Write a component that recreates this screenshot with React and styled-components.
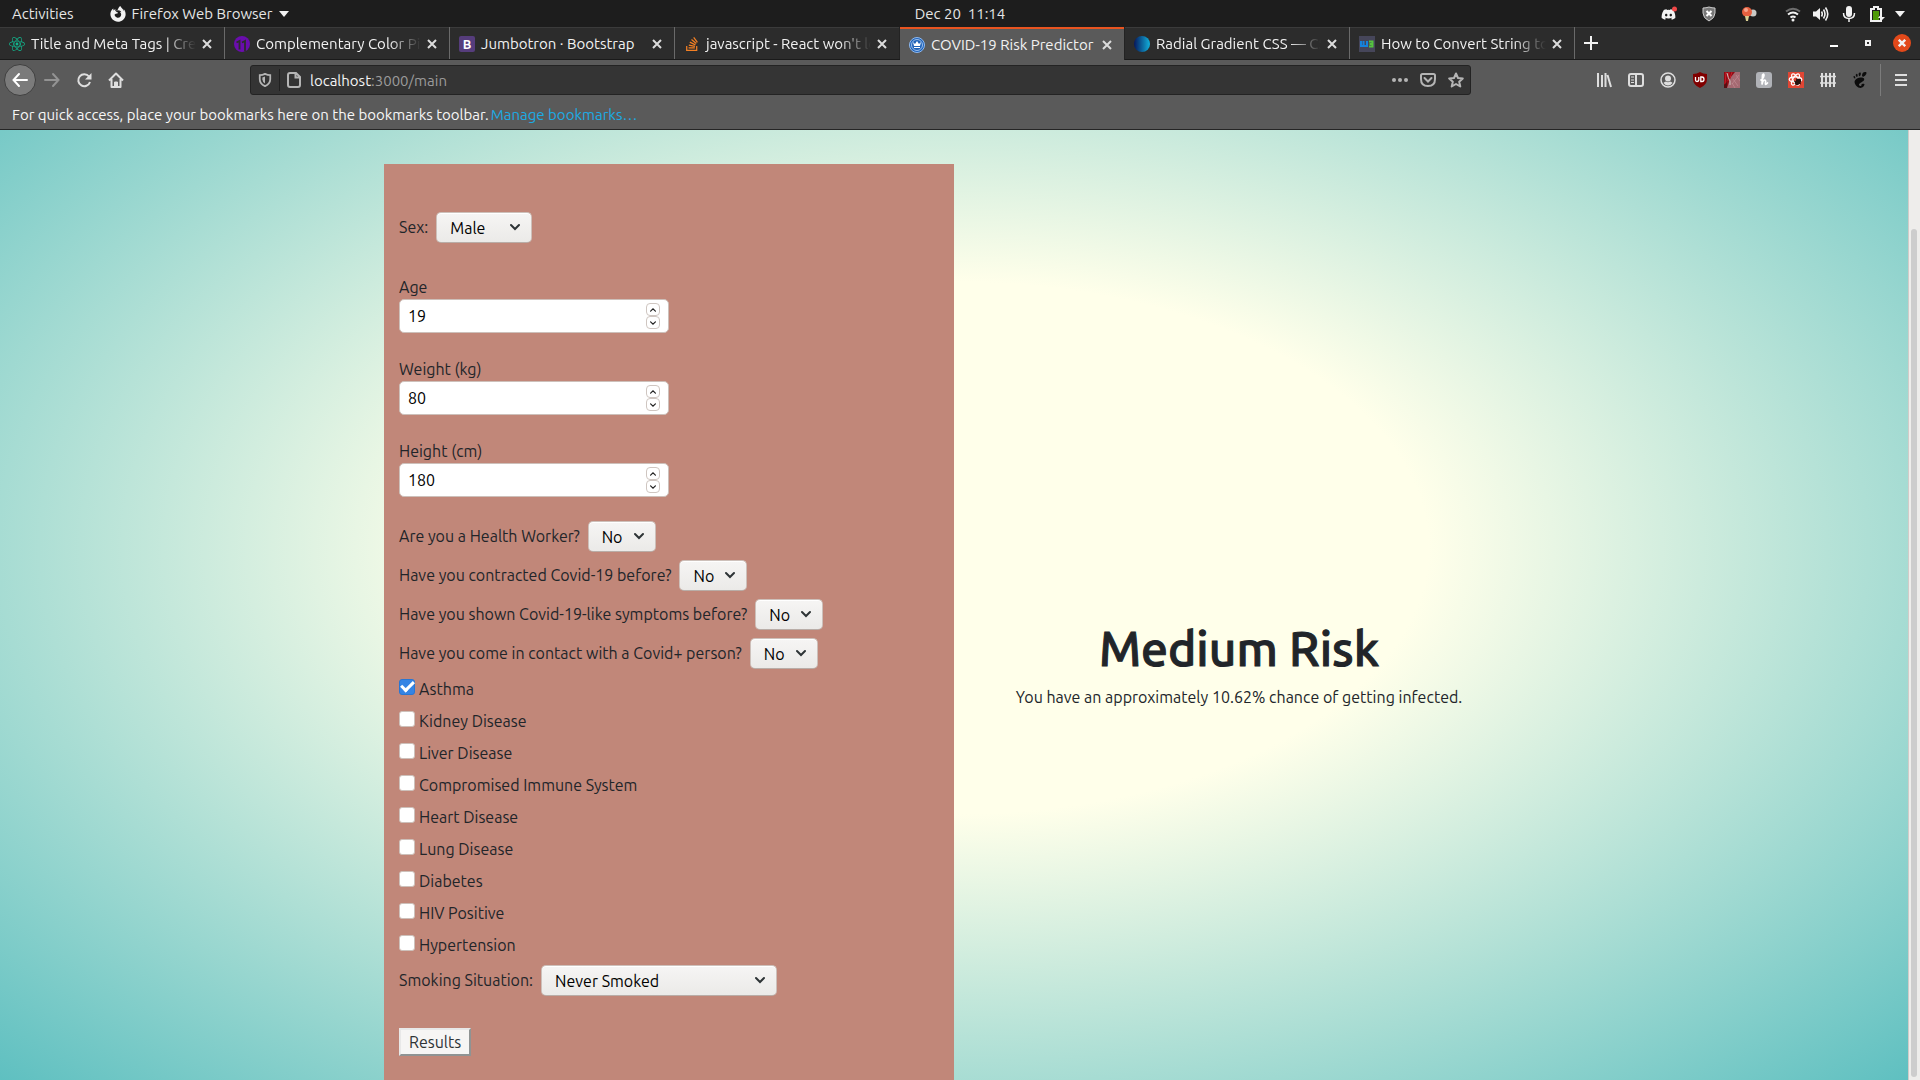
import React, { useState } from "react";
import styled, { createGlobalStyle, css } from "styled-components";
import { FaReact, FaDiscord, FaStackOverflow, FaFirefoxBrowser } from "react-icons/fa";
import { SiGnome } from "react-icons/si";

const GlobalStyle = createGlobalStyle`
  * { box-sizing: border-box; }
  html, body, #root { height: 100%; }
  body {
    margin: 0;
    overflow: hidden;
    font-family: Ubuntu, "Noto Sans", "Open Sans", sans-serif;
    font-size: 16px;
    line-height: 24px;
    color: #212529;
  }
  button, input, select { font: inherit; margin: 0; }
  svg { display: block; flex: none; }
`;

const Screen = styled.div`
  display: flex;
  flex-direction: column;
  height: 100vh;
`;

const plainButton = css`
  display: flex;
  align-items: center;
  justify-content: center;
  padding: 0;
  border: 0;
  background: none;
  color: inherit;
`;

/* Desktop bar */

const TopBar = styled.header`
  display: grid;
  grid-template-columns: 1fr auto 1fr;
  align-items: center;
  height: 27px;
  padding: 0 12px;
  background: #1d1d1d;
  color: #e6e6e6;
  font-size: 15px;
`;

const TopGroup = styled.div`
  display: flex;
  align-items: center;
  padding-right: ${(p) => (p.$end ? 3 : 0)}px;
  justify-content: ${(p) => (p.$end ? "flex-end" : "flex-start")};
`;

const AppMenu = styled.button`
  ${plainButton}
  gap: 6px;
`;

const Activities = styled.button`
  ${plainButton}
  margin-right: 36px;
`;

const TrayGroup = styled.div`
  display: flex;
  align-items: center;
  gap: ${(p) => p.$gap}px;
  margin-right: ${(p) => p.$after || 0}px;
`;

/* Tabs */

const TabStrip = styled.nav`
  display: flex;
  height: 33px;
  background: #2c2c2c;
  border-bottom: 1px solid #1a1a1a;
  box-shadow: inset 0 1px #3b3b3b;
  color: #f2f2f2;
  font-size: 15px;
`;

const TabItem = styled.div`
  display: flex;
  align-items: center;
  flex: 0 1 225px;
  min-width: 0;
  height: ${(p) => (p.$active ? 33 : 32)}px;
  padding: 2px 10px 0 9px;
  gap: 4px;
  border-right: 1px solid ${(p) => (p.$active || p.$beforeActive ? "#232323" : "#6a6a6a")};
  background: ${(p) => (p.$active ? "#5a5a5a" : "transparent")};
  box-shadow: ${(p) => (p.$active ? "inset 0 2px #e95420" : "none")};
`;

const TabTitle = styled.a`
  flex: 1;
  min-width: 0;
  padding-left: 2px;
  overflow: hidden;
  white-space: nowrap;
  color: inherit;
  text-decoration: none;
  mask-image: ${(p) => (p.$fade ? "linear-gradient(90deg, #000 calc(100% - 32px), transparent)" : "none")};
`;

const TabClose = styled.button`
  ${plainButton}
  width: 14px;
  height: 16px;
  color: #dcdcdc;
`;

const NewTab = styled.button`
  ${plainButton}
  width: 32px;
  height: 32px;
`;

const WindowControls = styled.div`
  display: flex;
  align-items: center;
  gap: 16px;
  margin-left: auto;
  padding-right: 9px;
`;

const WindowButton = styled.button`
  ${plainButton}
  width: 18px;
  height: 18px;
  border-radius: 50%;
  background: ${(p) => (p.$close ? "#e2491a" : "none")};
`;

/* Navigation */

const NavBar = styled.div`
  display: grid;
  grid-template-columns: 246px minmax(0, 1fr) 443px;
  align-items: center;
  height: 40px;
  padding-left: 4px;
  background: #5a5a5a;
  color: #dedede;
`;

const NavGroup = styled.div`
  display: flex;
  align-items: center;
`;

const NavButton = styled.button`
  ${plainButton}
  width: 32px;
  height: 32px;
  color: ${(p) => (p.$dim ? "#939393" : "inherit")};
`;

const BackButton = styled(NavButton)`
  border: 1px solid #404040;
  border-radius: 50%;
  background: #7b7b7b;
`;

const AddressBar = styled.div`
  display: flex;
  align-items: center;
  height: 30px;
  margin-right: 6px;
  border: 1px solid #232323;
  border-radius: 3px;
  background: #343434;
  color: #b5b5b5;
`;

const AddressButton = styled.button`
  ${plainButton}
  width: 28px;
  height: 28px;
`;

const AddressDivider = styled.span`
  width: 1px;
  height: 22px;
  background: #202020;
`;

const Address = styled.div`
  flex: 1;
  min-width: 0;
  padding: 1px 0 0 2px;
  font-size: 15px;
  color: #9b9b9b;
  b { font-weight: 400; color: #f5f5f5; }
`;

const Extensions = styled.div`
  display: flex;
  align-items: center;
  justify-content: flex-end;
`;

const MenuButton = styled(NavButton)`
  width: 40px;
  margin-left: 4px;
  border-left: 1px solid #7c7c7c;
`;

const BookmarksBar = styled.div`
  display: flex;
  align-items: center;
  gap: 2px;
  height: 30px;
  padding: 0 12px;
  border-bottom: 1px solid #252525;
  background: #5a5a5a;
  color: #f7f7f7;
  font-size: 15px;
  a { color: #1cabe4; text-decoration: none; }
`;

/* Web page */

const Viewport = styled.div`
  display: flex;
  flex: 1;
  min-height: 0;
`;

const Page = styled.main`
  flex: 1;
  min-width: 0;
  overflow: hidden;
  padding-top: 34px;
  background: radial-gradient(ellipse 71% 80% at 50% 44%, #ffffea 35%, #5dbfc0 100%);
`;

const Columns = styled.div`
  display: grid;
  grid-template-columns: 1fr 1fr;
  width: 100%;
  max-width: 1140px;
  margin: 0 auto;
`;

const Panel = styled.form`
  display: flex;
  flex-direction: column;
  align-items: flex-start;
  gap: 8px;
  padding: 48px 15px 124px;
  background: #c18779;
`;

const SelectRow = styled.div`
  display: flex;
  align-items: flex-start;
  gap: 8px;
  margin-bottom: ${(p) => p.$after || 0}px;
  line-height: 30px;
`;

const SelectBox = styled.div`
  position: relative;
  width: ${(p) => p.$width}px;
  color: #2e3436;
  svg {
    position: absolute;
    right: 12px;
    top: 10px;
    pointer-events: none;
  }
`;

const Select = styled.select`
  display: block;
  width: 100%;
  height: 31px;
  padding: 0 13px 2px;
  appearance: none;
  border: 1px solid #cdc0ba;
  border-bottom-color: #b9ada7;
  border-radius: 5px;
  background: linear-gradient(#f6f5f4, #ebeae8);
  box-shadow: inset 0 1px #fff;
  color: #000;
`;

const Field = styled.div`
  display: flex;
  flex-direction: column;
  width: 270px;
  margin-bottom: 16px;
`;

const NumberBox = styled.div`
  position: relative;
`;

const NumberInput = styled.input`
  display: block;
  width: 100%;
  height: 34px;
  padding: 0 30px 0 8px;
  appearance: textfield;
  border: 1px solid #cdc0ba;
  border-radius: 5px;
  background: #fff;
  color: #000;
  &::-webkit-inner-spin-button { appearance: none; }
`;

const Stepper = styled.div`
  position: absolute;
  right: 9px;
  top: 4px;
  display: flex;
  flex-direction: column;
`;

const StepButton = styled.button`
  ${plainButton}
  width: 14px;
  height: 13px;
  border: 1px solid #cfc6c1;
  border-radius: 4px;
  background: #fff;
  color: #222;
`;

const CheckRow = styled.label`
  display: flex;
  align-items: flex-start;
  gap: 4px;
`;

const Checkbox = styled.input`
  display: grid;
  place-items: center;
  width: 16px;
  height: 16px;
  margin-top: 2px;
  appearance: none;
  border: 1px solid #cdc0ba;
  border-radius: 3px;
  background: #fff;
  &:checked { border-color: #2a76d2; background: #3584e4; }
  &:checked::after {
    content: "";
    width: 10px;
    height: 5px;
    margin-bottom: 4px;
    border: solid #fff;
    border-width: 0 0 3px 3px;
    transform: rotate(-45deg);
  }
`;

const ResultsButton = styled.button`
  height: 28px;
  margin-top: 24px;
  padding: 0 8px;
  border: 2px solid;
  border-color: #e8e8e8 #8f9393 #8f9393 #e8e8e8;
  background: #f6f5f4;
  color: #2e3436;
  line-height: 24px;
`;

const Outcome = styled.section`
  display: flex;
  flex-direction: column;
  align-items: center;
  justify-content: center;
  padding: 0 15px;
  text-align: center;
`;

const OutcomeTitle = styled.h1`
  margin: 0 0 8px;
  font-size: 48px;
  font-weight: 500;
  line-height: 57px;
  -webkit-text-stroke: 1px currentColor;
`;

const OutcomeText = styled.p`
  margin: 0 0 16px;
`;

const ScrollTrack = styled.div`
  display: flex;
  width: 12px;
  padding: 99px 2px 3px;
  border-left: 1px solid #d2cbc8;
  background: #eeedeb;
`;

const ScrollThumb = styled.div`
  flex: 1;
  margin-right: 1px;
  border-radius: 3px;
  background: #cdcdcd;
`;

const Cross = ({ size = 10, width = 2 }) => (
  <svg width={size} height={size} viewBox="0 0 10 10" stroke="currentColor" strokeWidth={width} fill="none">
    <path d="M1 1l8 8M9 1l-8 8" />
  </svg>
);

const Chevron = ({ size = 10, up }) => (
  <svg width={size} height={size} viewBox="0 0 10 10" fill="none" stroke="currentColor" strokeWidth="2" strokeLinecap="round">
    <path d={up ? "M1 7l4-4 4 4" : "M1 3l4 4 4-4"} />
  </svg>
);

const Caret = () => (
  <svg width="10" height="6" viewBox="0 0 10 6" fill="#f2f2f2"><path d="M0 0h10L5 6z" /></svg>
);

const favicons = {
  react: <FaReact size={16} color="#12b48c" />,
  eleven: (
    <svg width="16" height="16" viewBox="0 0 16 16">
      <circle cx="8" cy="8" r="8" fill="#6a0dad" />
      <path d="M2.500 6.500L5.500 5v8.500M8 6.500L11 5v10.500" stroke="#2c2c2c" strokeWidth="1.800" fill="none" />
    </svg>
  ),
  bootstrap: (
    <svg width="16" height="16" viewBox="0 0 16 16">
      <rect width="16" height="16" rx="2" fill="#563d7c" />
      <text x="8" y="12.500" textAnchor="middle" fontSize="13" fontWeight="700" fill="#fff">B</text>
    </svg>
  ),
  stack: <FaStackOverflow size={16} color="#f48024" />,
  covid: (
    <svg width="16" height="16" viewBox="0 0 16 16" fill="none">
      <circle cx="8" cy="8" r="7.500" fill="#1f62b8" stroke="#8fbaf0" />
      <circle cx="8" cy="8" r="5.500" stroke="#bcd6f6" strokeWidth=".8" />
      <path d="M4 5l2 2 2-3 2 3 2-2-1 4H5z" fill="#fff" />
      <path d="M5 10.500h6" stroke="#fff" strokeWidth="1" />
    </svg>
  ),
  radial: (
    <svg width="16" height="16" viewBox="0 0 16 16">
      <defs>
        <linearGradient id="orb"><stop stopColor="#06175c" /><stop offset="1" stopColor="#12b1dc" /></linearGradient>
      </defs>
      <circle cx="8" cy="8" r="8" fill="url(#orb)" />
    </svg>
  ),
  w3: (
    <svg width="16" height="16" viewBox="0 0 16 16" fill="none" strokeWidth="2">
      <rect width="16" height="16" fill="#46465a" />
      <path d="M2 5v5h2.500V5M4.500 10H8V5" stroke="#1583dd" />
      <path d="M10 5.500h3.500v5H10M10.500 8h3" stroke="#55c23f" />
    </svg>
  ),
};

const tabs = [
  { icon: "react", title: "Title and Meta Tags | Crea", fade: true },
  { icon: "eleven", title: "Complementary Color Pic", fade: true },
  { icon: "bootstrap", title: "Jumbotron · Bootstrap" },
  { icon: "stack", title: "javascript - React won't lo", fade: true },
  { icon: "covid", title: "COVID-19 Risk Predictor", active: true },
  { icon: "radial", title: "Radial Gradient CSS — CSS", fade: true },
  { icon: "w3", title: "How to Convert String to", fade: true },
];

const line = { fill: "none", stroke: "currentColor", strokeWidth: 2 };

const toolbar = [
  ["Library", <svg width="16" height="16" viewBox="0 0 16 16" {...line}><path d="M2 1v14M6 3v12M9.500 1v14M11.500 3l3.500 12" /></svg>],
  ["Sidebars", <svg width="16" height="16" viewBox="0 0 16 16" {...line}><rect x="1" y="2" width="14" height="12" rx="2" /><path d="M8 2v12" /><path d="M3 5h3M3 8h3M3 10.500h3" strokeWidth="1" /></svg>],
  ["Account", <svg width="16" height="16" viewBox="0 0 16 16"><circle cx="8" cy="8" r="7" fill="none" stroke="currentColor" strokeWidth="1.500" /><circle cx="8" cy="6.500" r="3" fill="currentColor" /><path d="M3.500 11q1-1.500 2.500-1.500 2 1.500 4 0 1.500 0 2.500 1.500Q10.500 13.500 8 13.500T3.500 11z" fill="currentColor" /></svg>],
  ["uBlock", <svg width="16" height="16" viewBox="0 0 16 16"><path d="M8 0q3 2 7 2v5q0 6-7 9-7-3-7-9V2q4 0 7-2z" fill="#800000" /><path d="M3.500 5v3q0 1.500 1.500 1.500T6.800 8V5M8.800 5v4.500H10Q12 9.500 12 7.300T10 5z" fill="none" stroke="#fff" strokeWidth="1.300" /></svg>],
  ["Curtain", <svg width="16" height="16" viewBox="0 0 16 16"><rect width="16" height="16" fill="#a56a72" /><path d="M0 0h11L7 5l-2 5-2 6H0z" fill="#8f0b14" /><path d="M2 0L1 12M5 0L4 9M8 0L6 6" stroke="#c91e29" /><path d="M0 13l3-3v6H0z" fill="#571013" /><path d="M3 1q1 5 3 8v4" fill="none" stroke="#c9c4bd" strokeWidth="1" /><path d="M9 7l5 7M12 3l4 6M8 11l3 5M15 3l-7 9" stroke="#c59198" strokeWidth=".6" /></svg>],
  ["Honey", <svg width="16" height="16" viewBox="0 0 16 16"><rect width="16" height="16" rx="3" fill="#b0b2b7" /><path d="M5 8q3-2 3-4.500T6.500 3L6 12.500Q7 8 8.500 8t1 3 2 0" fill="none" stroke="#fff" strokeWidth="1.700" strokeLinecap="round" /></svg>],
  ["React Tools", <svg width="16" height="16" viewBox="0 0 16 16"><rect width="16" height="16" fill="#e04634" /><g fill="none" stroke="#fff" strokeWidth="1.200"><ellipse cx="7.500" cy="7.500" rx="6.300" ry="2.600" /><ellipse cx="7.500" cy="7.500" rx="6.300" ry="2.600" transform="rotate(60 7.500 7.500)" /><ellipse cx="7.500" cy="7.500" rx="6.300" ry="2.600" transform="rotate(120 7.500 7.500)" /></g><ellipse cx="10" cy="10" rx="2.500" ry="3.500" transform="rotate(45 10 10)" fill="#25130f" /><path d="M6 9l7 3M8 7l5 1M8 13l1-6" stroke="#25130f" /></svg>],
  ["Fence", <svg width="16" height="16" viewBox="0 0 16 16" {...line}><path d="M2 1v14M6 1v14M10 1v14M14 1v14" /><path d="M0 4.500h16M0 11h16" strokeWidth="1.500" /></svg>],
  ["GNOME", <SiGnome size={16} color="#0c0c0c" />],
];

const yesNo = [
  ["worker", "Are you a Health Worker?"],
  ["contracted", "Have you contracted Covid-19 before?"],
  ["symptoms", "Have you shown Covid-19-like symptoms before?"],
  ["contact", "Have you come in contact with a Covid+ person?"],
];

const conditions = [
  "Asthma", "Kidney Disease", "Liver Disease", "Compromised Immune System", "Heart Disease",
  "Lung Disease", "Diabetes", "HIV Positive", "Hypertension",
];

function LabeledSelect({ id, label, options, width = 68, after }) {
  return (
    <SelectRow $after={after}>
      <label htmlFor={id}>{label}</label>
      <SelectBox $width={width}>
        <Select id={id}>{options.map((o) => <option key={o}>{o}</option>)}</Select>
        <Chevron />
      </SelectBox>
    </SelectRow>
  );
}

function NumberField({ id, label, initial }) {
  const [value, setValue] = useState(initial);
  return (
    <Field>
      <label htmlFor={id}>{label}</label>
      <NumberBox>
        <NumberInput id={id} type="number" value={value} onChange={(e) => setValue(Number(e.target.value))} />
        <Stepper>
          <StepButton type="button" aria-label={`Increase ${label}`} onClick={() => setValue(value + 1)}><Chevron size={6} up /></StepButton>
          <StepButton type="button" aria-label={`Decrease ${label}`} onClick={() => setValue(value - 1)}><Chevron size={6} /></StepButton>
        </Stepper>
      </NumberBox>
    </Field>
  );
}

function DesktopBar() {
  return (
    <TopBar>
      <TopGroup>
        <Activities>Activities</Activities>
        <AppMenu><FaFirefoxBrowser size={16} color="#f2f2f2" />Firefox Web Browser<Caret /></AppMenu>
      </TopGroup>
      <span>Dec 20&nbsp; 11:14</span>
      <TopGroup $end>
        <TrayGroup $gap={24} $after={28}>
          <svg width="16" height="16" viewBox="0 0 16 16"><g transform="translate(0 1)"><FaDiscord size={15} color="#f4f4f4" /></g><circle cx="13.500" cy="3" r="2.500" fill="#f04747" /></svg>
          <svg width="16" height="16" viewBox="0 0 16 16"><path d="M2 2q3 0 6-1 3 1 6 1v5q0 5-6 8-6-3-6-8z" fill="#777" stroke="#ccc" /><path d="M5.500 5l5 5M10.500 5l-5 5" stroke="#fff" strokeWidth="2" /></svg>
          <svg width="16" height="16" viewBox="0 0 16 16"><circle cx="12" cy="7" r="3.500" fill="#c9c9c5" /><circle cx="6" cy="6" r="5" fill="#e5603f" /><circle cx="5" cy="4" r="2" fill="#f6a38c" /><path d="M4 10h4l-1 5H5z" fill="#d9cf91" /></svg>
        </TrayGroup>
        <TrayGroup $gap={12} $after={10}>
          <svg width="16" height="16" viewBox="0 0 16 16" {...line}><path d="M1 5.500q7-5.500 14 0" stroke="#6d6d6d" /><path d="M3 8.500q5-4 10 0M5.500 11.500q2.500-2 5 0" stroke="#f2f2f2" /><circle cx="8" cy="14" r="1.500" fill="#f2f2f2" stroke="none" /></svg>
          <svg width="16" height="16" viewBox="0 0 16 16" fill="none" stroke="#f2f2f2" strokeWidth="1.600"><path d="M0 5.500h3L7 2v12L3 10.500H0z" fill="#f2f2f2" stroke="none" /><path d="M8.500 5.500q1.500 2.500 0 5M10.500 3.500q3 4.500 0 9M12.500 1.500q4.500 6.500 0 13" /></svg>
          <svg width="16" height="16" viewBox="0 0 16 16"><rect x="5" y="0" width="6" height="11" rx="3" fill="#f2f2f2" /><path d="M2.500 7q0 5.500 5.500 5.500T13.500 7M8 12v4" fill="none" stroke="#f2f2f2" strokeWidth="1.500" /></svg>
          <svg width="16" height="16" viewBox="0 0 16 16"><path d="M5 1h4v2h3v12H2V3h3z" fill="#1d1d1d" stroke="#f2f2f2" strokeWidth="2" /><path d="M4 5h6v9H4z" fill="#4e9a06" /><path d="M13 7l-4 5h3l-1 4 5-5h-3z" fill="#f2f2f2" /></svg>
        </TrayGroup>
        <Caret />
      </TopGroup>
    </TopBar>
  );
}

function BrowserChrome() {
  return (
    <>
      <TabStrip>
        {tabs.map((t, i) => (
          <TabItem key={t.icon} $active={t.active} $beforeActive={tabs[i + 1]?.active}>
            {favicons[t.icon]}
            <TabTitle href="#" $fade={t.fade}>{t.title}</TabTitle>
            <TabClose aria-label="Close tab"><Cross /></TabClose>
          </TabItem>
        ))}
        <NewTab aria-label="New tab"><svg width="14" height="14" viewBox="0 0 14 14" {...line}><path d="M7 0v14M0 7h14" /></svg></NewTab>
        <WindowControls>
          <WindowButton aria-label="Minimize"><svg width="8" height="8" viewBox="0 0 8 8" fill="#fff"><path d="M0 6h8v2H0z" /></svg></WindowButton>
          <WindowButton aria-label="Restore"><svg width="6" height="6" viewBox="0 0 6 6" {...line}><path d="M1 1h4v4H1z" /></svg></WindowButton>
          <WindowButton $close aria-label="Close window"><Cross size={8} width={3} /></WindowButton>
        </WindowControls>
      </TabStrip>
      <NavBar>
        <NavGroup>
          <BackButton aria-label="Back"><svg width="16" height="16" viewBox="0 0 16 16" {...line} stroke="#fff" strokeLinecap="round"><path d="M15 8H1.500M7 2L1.500 8 7 14" /></svg></BackButton>
          <NavButton $dim aria-label="Forward"><svg width="16" height="16" viewBox="0 0 16 16" {...line} strokeLinecap="round"><path d="M1 8h13.500M9 2l5.500 6L9 14" /></svg></NavButton>
          <NavButton aria-label="Reload"><svg width="16" height="16" viewBox="0 0 16 16" {...line}><path d="M13 4.500A6 6 0 1 0 14 10" /><path d="M15.500 1v6.500H9z" fill="currentColor" stroke="none" /></svg></NavButton>
          <NavButton aria-label="Home"><svg width="16" height="16" viewBox="0 0 16 16" {...line}><path d="M1 8.500L8 1.500l7 7M3.500 7v8h9V7" strokeLinejoin="round" /><path d="M6.500 15v-5h3v5" fill="currentColor" strokeWidth="1" /></svg></NavButton>
        </NavGroup>
        <AddressBar>
          <AddressButton aria-label="Site protections"><svg width="14" height="14" viewBox="0 0 16 16" {...line}><path d="M2 2.500Q5 2.500 8 1q3 1.500 6 1.500V7q0 5-6 8-6-3-6-8z" /><path d="M8 4v8q-3-2-3-5V5z" fill="currentColor" stroke="none" /></svg></AddressButton>
          <AddressDivider />
          <AddressButton aria-label="Site information"><svg width="14" height="16" viewBox="0 0 14 16" {...line}><path d="M3 1h6l4 4v8q0 2-2 2H3q-2 0-2-2V3q0-2 2-2zM8.500 1v4.500H13" /></svg></AddressButton>
          <Address><b>localhost</b>:3000/main</Address>
          <AddressButton aria-label="Page actions"><svg width="16" height="16" viewBox="0 0 16 16" fill="currentColor"><circle cx="2" cy="8" r="2" /><circle cx="8" cy="8" r="2" /><circle cx="14" cy="8" r="2" /></svg></AddressButton>
          <AddressButton aria-label="Save to Pocket"><svg width="16" height="16" viewBox="0 0 16 16" {...line}><path d="M2.500 2h11Q15 2 15 3.500V7q0 7-7 7T1 7V3.500Q1 2 2.500 2z" /><path d="M4.500 6L8 9.500 11.500 6" strokeLinecap="round" /></svg></AddressButton>
          <AddressButton aria-label="Bookmark this page"><svg width="16" height="16" viewBox="0 0 16 16" {...line} strokeLinejoin="round"><path d="M8 1.500l2 4.500 4.800.5-3.600 3.200 1.100 4.800L8 12l-4.300 2.500 1.100-4.800L1.200 6.500 6 6z" /></svg></AddressButton>
        </AddressBar>
        <Extensions>
          {toolbar.map(([name, icon]) => <NavButton key={name} aria-label={name}>{icon}</NavButton>)}
          <MenuButton aria-label="Open menu"><svg width="12" height="12" viewBox="0 0 12 12" {...line}><path d="M0 1h12M0 6h12M0 11h12" /></svg></MenuButton>
        </Extensions>
      </NavBar>
      <BookmarksBar>
        <span>For quick access, place your bookmarks here on the bookmarks toolbar.</span>
        <a href="#">Manage bookmarks…</a>
      </BookmarksBar>
    </>
  );
}

export default function App() {
  return (
    <Screen>
      <GlobalStyle />
      <DesktopBar />
      <BrowserChrome />
      <Viewport>
        <Page>
          <Columns>
            <Panel onSubmit={(e) => e.preventDefault()}>
              <LabeledSelect id="sex" label="Sex:" options={["Male", "Female"]} width={96} after={24} />
              <NumberField id="age" label="Age" initial={19} />
              <NumberField id="weight" label="Weight (kg)" initial={80} />
              <NumberField id="height" label="Height (cm)" initial={180} />
              {yesNo.map(([id, label]) => <LabeledSelect key={id} id={id} label={label} options={["No", "Yes"]} />)}
              {conditions.map((c) => (
                <CheckRow key={c}>
                  <Checkbox type="checkbox" defaultChecked={c === "Asthma"} />
                  {c}
                </CheckRow>
              ))}
              <LabeledSelect id="smoking" label="Smoking Situation:" options={["Never Smoked", "Former Smoker", "Current Smoker"]} width={236} />
              <ResultsButton>Results</ResultsButton>
            </Panel>
            <Outcome>
              <OutcomeTitle>Medium Risk</OutcomeTitle>
              <OutcomeText>You have an approximately 10.62% chance of getting infected.</OutcomeText>
            </Outcome>
          </Columns>
        </Page>
        <ScrollTrack><ScrollThumb /></ScrollTrack>
      </Viewport>
    </Screen>
  );
}
